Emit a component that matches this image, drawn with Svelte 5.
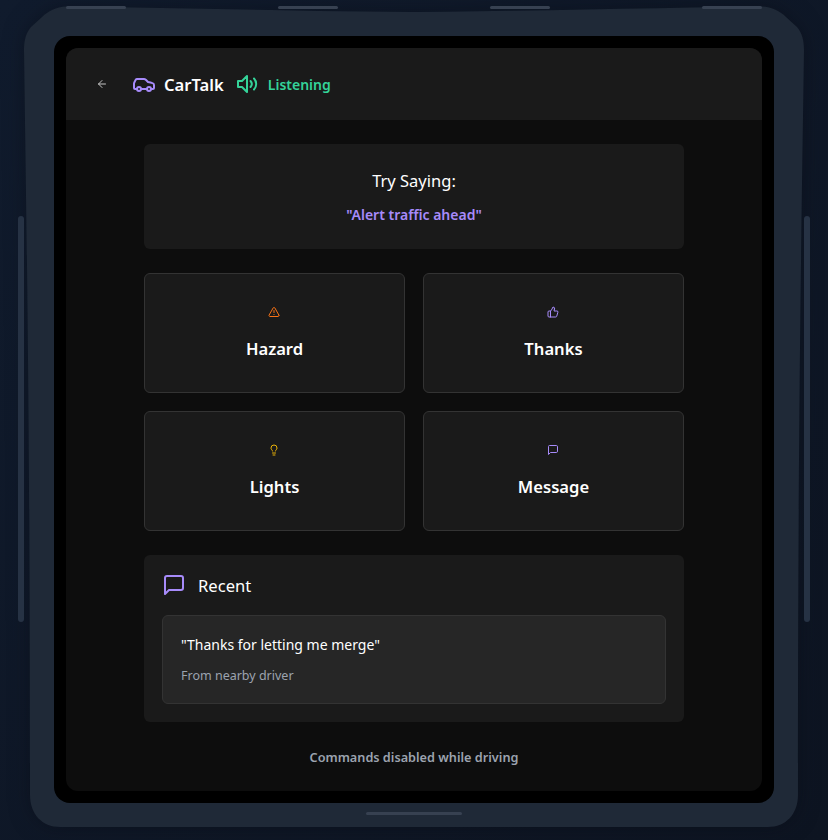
<script>
  const actions = [
    { label: 'Hazard', tone: 'orange', icon: 'hazard' },
    { label: 'Thanks', tone: 'violet', icon: 'thanks' },
    { label: 'Lights', tone: 'yellow', icon: 'lights' },
    { label: 'Message', tone: 'violet', icon: 'message' }
  ];
</script>

<div class="page">
  <div class="device">
    <svg class="shell" viewBox="0 0 828 840" aria-hidden="true">
      <path d="M66 6.500 C 180 8, 300 11, 414 12 C 530 11, 650 8, 762 6.500 C 772 7, 780 11, 786 17 L 797 27 C 802 33, 804 40, 804 50 C 802 200, 798 400, 798 795 C 798 814, 786 827, 768 827 L 60 827 C 42 827, 30 814, 30 795 C 30 400, 26 200, 24 50 C 24 40, 26 33, 31 27 L 42 17 C 48 11, 56 7, 66 6.500 Z" />
    </svg>
    <div class="bezel">
      <div class="screen">
        <header class="topbar">
          <button class="back" aria-label="Back">
            <svg viewBox="0 0 24 24"><path d="m12 19-7-7 7-7" /><path d="M19 12H5" /></svg>
          </button>
          <div class="brand">
            <svg class="car" viewBox="0 0 24 24"><path d="M19 17h2c.6 0 1-.4 1-1v-3c0-.9-.7-1.700-1.500-1.900C18.700 10.600 16 10 16 10s-1.300-1.400-2.200-2.300c-.5-.4-1.100-.7-1.800-.7H5c-.6 0-1.100.4-1.400.9l-1.400 2.900A3.700 3.700 0 0 0 2 12v4c0 .6.4 1 1 1h2" /><circle cx="7" cy="17" r="2" /><path d="M9 17h6" /><circle cx="17" cy="17" r="2" /></svg>
            <span class="brand-name">CarTalk</span>
          </div>
          <div class="status">
            <svg class="speaker" viewBox="0 0 24 24"><path d="M12 4 7 9H3v6h4l5 5V4Z" /><path d="M15.500 9a4.500 4.500 0 0 1 0 6" /><path d="M19 6.500a8 8 0 0 1 0 11" /></svg>
            <span>Listening</span>
          </div>
        </header>

        <main class="content">
          <section class="prompt">
            <h2>Try Saying:</h2>
            <p>"Alert traffic ahead"</p>
          </section>

          <section class="actions">
            {#each actions as action}
              <button class="action">
                <svg class="action-icon {action.tone}" viewBox="0 0 24 24">
                  {#if action.icon === 'hazard'}
                    <path d="m21.730 18-8-14a2 2 0 0 0-3.480 0l-8 14A2 2 0 0 0 4 21h16a2 2 0 0 0 1.730-3Z" /><path d="M12 9v4" /><path d="M12 17h.01" />
                  {:else if action.icon === 'thanks'}
                    <path d="M7 10v12" /><path d="M15 5.880 14 10h5.830a2 2 0 0 1 1.920 2.560l-2.330 8A2 2 0 0 1 17.500 22H4a2 2 0 0 1-2-2v-8a2 2 0 0 1 2-2h2.760a2 2 0 0 0 1.790-1.110L12 2h0a3.130 3.130 0 0 1 3 3.880Z" />
                  {:else if action.icon === 'lights'}
                    <path d="M15 14c.2-1 .7-1.700 1.500-2.500 1-.9 1.500-2.200 1.500-3.500A6 6 0 0 0 6 8c0 1 .2 2.200 1.500 3.500.7.7 1.300 1.500 1.500 2.500" /><path d="M9 18h6" /><path d="M10 22h4" />
                  {:else}
                    <path d="M21 15a2 2 0 0 1-2 2H7l-4 4V5a2 2 0 0 1 2-2h14a2 2 0 0 1 2 2z" />
                  {/if}
                </svg>
                <span>{action.label}</span>
              </button>
            {/each}
          </section>

          <section class="recent">
            <div class="recent-head">
              <svg class="bubble" viewBox="0 0 24 24"><path d="M21 15a2 2 0 0 1-2 2H7l-4 4V5a2 2 0 0 1 2-2h14a2 2 0 0 1 2 2z" /></svg>
              <h3>Recent</h3>
            </div>
            <div class="note">
              <p class="quote">"Thanks for letting me merge"</p>
              <p class="from">From nearby driver</p>
            </div>
          </section>

          <p class="footnote">Commands disabled while driving</p>
        </main>
      </div>
    </div>
  </div>
  <div class="rail rail-left"></div>
  <div class="rail rail-right"></div>
  <div class="vents">
    <span></span><span></span><span></span><span></span>
  </div>
  <div class="home"></div>
</div>

<style>
  :global(body) {
    margin: 0;
    background: #0f172a;
  }

  .page {
    position: relative;
    box-sizing: border-box;
    width: 828px;
    height: 840px;
    padding: 36px 54px 37px;
    overflow: hidden;
    background: linear-gradient(135deg, #101b2d 0%, #0d1421 100%);
    font-family: "Noto Sans", "Open Sans", sans-serif;
    color: #fff;
  }

  .device {
    position: relative;
    height: 100%;
  }

  .shell {
    position: absolute;
    left: -54px;
    top: -36px;
    width: 828px;
    height: 840px;
    filter: drop-shadow(0 0 10px rgba(8, 12, 22, 0.5));
  }

  .shell path {
    fill: #1f2937;
  }

  .bezel {
    position: relative;
    box-sizing: border-box;
    height: 767px;
    padding: 12px;
    background: #000;
    border-radius: 16px;
  }

  .screen {
    display: flex;
    flex-direction: column;
    height: 100%;
    overflow: hidden;
    background: #0d0d0d;
    border-radius: 12px;
  }

  .rail {
    position: absolute;
    top: 216px;
    width: 6px;
    height: 406px;
    border-radius: 3px;
    background: #263244;
  }

  .rail-left { left: 18px; }
  .rail-right { left: 804px; }

  .vents {
    position: absolute;
    z-index: 2;
    top: 6px;
    left: 66px;
    right: 66px;
    display: flex;
    justify-content: space-between;
  }

  .vents span {
    width: 60px;
    height: 3px;
    border-radius: 2px;
    background: #374151;
  }

  .home {
    position: absolute;
    left: 366px;
    top: 812px;
    width: 96px;
    height: 3px;
    border-radius: 2px;
    background: #374151;
  }

  .topbar {
    display: flex;
    align-items: center;
    flex: none;
    box-sizing: border-box;
    height: 72px;
    padding: 0 24px;
    background: #1a1a1a;
  }

  .topbar svg,
  .action-icon,
  .bubble {
    fill: none;
    stroke: currentColor;
    stroke-width: 2;
    stroke-linecap: round;
    stroke-linejoin: round;
  }

  .back {
    display: flex;
    padding: 0;
    margin: 0 24px 0 6px;
    border: 0;
    background: none;
    color: #c4c4c4;
  }

  .back svg {
    width: 12px;
    height: 12px;
  }

  .brand {
    display: flex;
    align-items: center;
    gap: 8px;
  }

  .car {
    width: 24px;
    height: 24px;
    color: #a78bfa;
  }

  .brand-name {
    font-size: 16.600px;
    font-weight: 600;
  }

  .status {
    display: flex;
    align-items: center;
    gap: 9px;
    margin-left: 11px;
    color: #34d399;
    font-size: 14px;
    font-weight: 600;
  }

  .speaker {
    width: 24px;
    height: 24px;
  }

  .content {
    display: flex;
    flex-direction: column;
    width: 540px;
    margin: 0 auto;
    padding-top: 24px;
  }

  .prompt {
    height: 105px;
    box-sizing: border-box;
    padding-top: 24px;
    border-radius: 6px;
    background: #1a1a1a;
    text-align: center;
  }

  .prompt h2 {
    margin: 0;
    font-size: 16.500px;
    font-weight: 400;
    line-height: 26px;
  }

  .prompt p {
    margin: 11px 0 0;
    color: #a78bfa;
    font-size: 14px;
    font-weight: 600;
    line-height: 20px;
  }

  .actions {
    display: grid;
    grid-template-columns: 1fr 1fr;
    gap: 18px;
    margin-top: 24px;
  }

  .action {
    display: flex;
    flex-direction: column;
    align-items: center;
    box-sizing: border-box;
    height: 120px;
    padding: 32px 0 0;
    border: 1px solid #333;
    border-radius: 6px;
    background: #1a1a1a;
    color: #fff;
    font: inherit;
    font-size: 16.600px;
    font-weight: 600;
  }

  .action span {
    margin-top: 17px;
    line-height: 28px;
  }

  .action-icon {
    width: 12px;
    height: 12px;
    transform: translateX(-1px);
  }

  .orange { color: #f97316; }
  .violet { color: #a78bfa; }
  .yellow { color: #eab308; }

  .recent {
    box-sizing: border-box;
    height: 167px;
    margin-top: 24px;
    padding: 18px;
    border-radius: 6px;
    background: #1a1a1a;
  }

  .recent-head {
    display: flex;
    align-items: center;
    gap: 12px;
    height: 24px;
  }

  .bubble {
    width: 24px;
    height: 24px;
    color: #a78bfa;
  }

  .recent-head h3 {
    margin: 2px 0 0;
    font-size: 16.600px;
    font-weight: 400;
    line-height: 26px;
  }

  .note {
    box-sizing: border-box;
    height: 89px;
    margin-top: 18px;
    padding: 19px 18px 0;
    border: 1px solid #333;
    border-radius: 6px;
    background: #262626;
  }

  .quote {
    margin: 0;
    font-size: 14px;
    line-height: 20px;
  }

  .from {
    margin: 11px 0 0;
    color: #9ca3af;
    font-size: 12.500px;
    line-height: 20px;
  }

  .footnote {
    margin: 25px 0 0;
    color: #9ca3af;
    font-size: 12.700px;
    font-weight: 600;
    line-height: 20px;
    text-align: center;
  }
</style>
